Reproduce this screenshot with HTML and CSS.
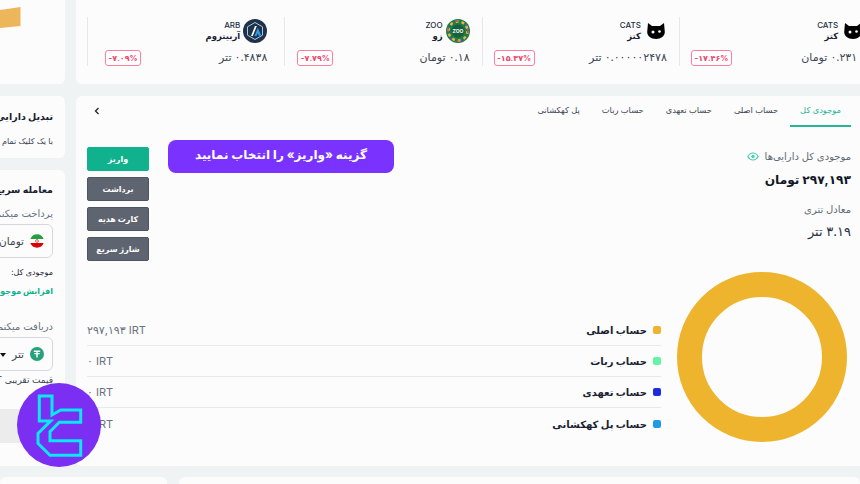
FILE: index.html
```html
<!DOCTYPE html>
<html lang="fa">
<head>
	<meta charset="UTF-8">
	<title>موجودی کل</title>
	<link rel="stylesheet" href="styles.css">
</head>
<body>
	<div class="page">
		<div class="side">
			<div class="side-card side-top">
				<svg class="gold" width="21" height="21" viewBox="0 0 21 21"><path d="M0 3 20.500 0V19L0 21z" fill="#edb65a"/></svg>
			</div>
			<div class="side-card side-convert">
				<h3>تبدیل دارایی خرد</h3>
				<p>با یک کلیک تمام دارایی</p>
			</div>
			<div class="side-card side-trade">
				<h3>معامله سریع</h3>
				<p class="lbl">پرداخت میکنم</p>
				<div class="picker">
					<svg width="14" height="14" viewBox="0 0 14 14"><circle cx="7" cy="7" r="7" fill="#fff"/><path d="M.4 5A7 7 0 0 1 13.600 5z" fill="#239f40"/><path d="M.4 9H13.600A7 7 0 0 1 .4 9z" fill="#da0000"/><circle cx="7" cy="7" r="1.400" fill="none" stroke="#c33" stroke-width=".8"/></svg>
					<span>تومان</span>
				</div>
				<p class="bal">موجودی کل:</p>
				<p class="inc">افزایش موجودی</p>
				<p class="lbl recv">دریافت میکنم</p>
				<div class="picker">
					<svg width="14" height="14" viewBox="0 0 14 14"><circle cx="7" cy="7" r="7" fill="#26a17b"/><path d="M3.800 3.600h6.400v1.300H7.700v1.200c1.300.1 2.400.3 2.400.7s-1.100.6-2.400.7v3H6.300v-3c-1.300-.1-2.400-.3-2.400-.7s1.100-.6 2.400-.7V4.900H3.800z" fill="#fff"/></svg>
					<span>تتر</span>
					<i class="caret"></i>
				</div>
				<p class="rate">قیمت تقریبی USDT</p>
				<div class="grey-btn"></div>
			</div>
		</div>

		<div class="main">
			<div class="ticker">
				<div class="coin coin-arb">
					<span class="pct">-۷.۰۹%</span>
					<div class="coin-info">
						<div class="coin-head">
							<div class="coin-name"><b>ARB</b><strong>آربیتروم</strong></div>
							<svg class="coin-icon" width="24" height="24" viewBox="0 0 24 24"><circle cx="12" cy="12" r="12" fill="#213147"/><path d="M12 3.500 19.500 7.800V16.200L12 20.500 4.500 16.200V7.800z" fill="none" stroke="#9dcced" stroke-width="1"/><path d="M8 17 12 7h1.800L9.800 17z" fill="#fff"/><path d="M11.500 17 14.800 9 18 16l-2 1.200-1.300-3-1.300 3z" fill="#28a0f0"/></svg>
						</div>
						<div class="coin-price">۰.۴۸۳۸ تتر</div>
					</div>
				</div>
				<div class="coin coin-zoo">
					<span class="pct">-۷.۷۹%</span>
					<div class="coin-info">
						<div class="coin-head">
							<div class="coin-name"><b>ZOO</b><strong>زو</strong></div>
							<svg class="coin-icon" width="24" height="24" viewBox="0 0 24 24"><circle cx="12" cy="12" r="12" fill="#1d7a4a"/><circle cx="12" cy="12" r="9.500" fill="none" stroke="#e9b63c" stroke-width="2.500" stroke-dasharray="3 3"/><circle cx="12" cy="12" r="10" fill="none" stroke="#7a4bd0" stroke-width="1.500" stroke-dasharray="2 9"/><circle cx="12" cy="12" r="10" fill="none" stroke="#e2503f" stroke-width="1.500" stroke-dasharray="2 13"/><circle cx="12" cy="12" r="6.500" fill="#17603c"/><text x="12" y="14" text-anchor="middle" class="zoo-text">ZOO</text></svg>
						</div>
						<div class="coin-price">۰.۱۸ تومان</div>
					</div>
				</div>
				<div class="coin coin-cats">
					<span class="pct">-۱۵.۳۷%</span>
					<div class="coin-info">
						<div class="coin-head">
							<div class="coin-name"><b>CATS</b><strong>کتز</strong></div>
							<svg class="coin-icon" width="18" height="16" viewBox="0 0 18 16"><path d="M1 0 5 3h8l4-3 .8 9c0 4-3.800 7-8.800 7S.2 13 .2 9z" fill="#000"/><circle cx="6" cy="9" r="1.500" fill="#fff"/><circle cx="12.500" cy="8.500" r="1.300" fill="#fff"/></svg>
						</div>
						<div class="coin-price">۰.۰۰۰۰۰۲۴۷۸ تتر</div>
					</div>
				</div>
				<div class="coin coin-cats coin-last">
					<span class="pct">-۱۷.۴۶%</span>
					<div class="coin-info">
						<div class="coin-head">
							<div class="coin-name"><b>CATS</b><strong>کتز</strong></div>
							<svg class="coin-icon" width="18" height="16" viewBox="0 0 18 16"><path d="M1 0 5 3h8l4-3 .8 9c0 4-3.800 7-8.800 7S.2 13 .2 9z" fill="#000"/><circle cx="6" cy="9" r="1.500" fill="#fff"/><circle cx="12.500" cy="8.500" r="1.300" fill="#fff"/></svg>
						</div>
						<div class="coin-price">۰.۲۳۱ تومان</div>
					</div>
				</div>
			</div>

			<div class="wallet">
				<div class="tabs">
					<span class="tab active">موجودی کل</span>
					<span class="tab">حساب اصلی</span>
					<span class="tab">حساب تعهدی</span>
					<span class="tab">حساب ربات</span>
					<span class="tab">پل کهکشانی</span>
					<svg class="chev" width="6" height="8" viewBox="0 0 6 8"><path d="M4.500 1 1.500 4 4.500 7" fill="none" stroke="#1a2233" stroke-width="1.300"/></svg>
				</div>
				<div class="top-row">
					<div class="summary">
						<p class="sum-lbl">موجودی کل دارایی‌ها
							<svg width="12" height="9" viewBox="0 0 12 9"><path d="M.8 4.500C2.200 2 4 1 6 1s3.800 1 5.200 3.500C9.800 7 8 8 6 8S2.200 7 .8 4.500z" fill="none" stroke="#4fcfae" stroke-width="1.200"/><circle cx="6" cy="4.500" r="1.700" fill="#4fcfae"/></svg>
						</p>
						<p class="sum-total">۲۹۷,۱۹۳ تومان</p>
						<p class="sum-lbl sum-eq">معادل تتری</p>
						<p class="sum-usdt">۳.۱۹ تتر</p>
					</div>
					<div class="actions">
						<button class="act green" type="button">واریز</button>
						<button class="act" type="button">برداشت</button>
						<button class="act" type="button">کارت هدیه</button>
						<button class="act" type="button">شارژ سریع</button>
					</div>
				</div>
				<div class="bottom-row">
					<div class="donut"></div>
					<ul class="legend">
						<li><i class="dot" style="background:#efb42d"></i><b>حساب اصلی</b><span>۲۹۷,۱۹۳ IRT</span></li>
						<li><i class="dot" style="background:#63f5a6"></i><b>حساب ربات</b><span>۰ IRT</span></li>
						<li><i class="dot" style="background:#1c2bdc"></i><b>حساب تعهدی</b><span>۰ IRT</span></li>
						<li><i class="dot" style="background:#1f9bea"></i><b>حساب پل کهکشانی</b><span>۰ IRT</span></li>
					</ul>
				</div>
				<div class="banner">گزینه «واریز» را انتخاب نمایید</div>
			</div>

			<div class="bottom-cards">
				<div class="bottom-card"></div>
				<div class="bottom-card"></div>
			</div>
		</div>
	</div>

	<div class="badge">
		<svg width="60" height="70" viewBox="-1 0 60 70"><path d="M9.300 6H22V25L30.700 20H50.700V32.300H29.300L20 41.700V50.700H50.700V65.300H20L8 53.300V43.300L20.700 31H9.300z" fill="none" stroke="#0ae8f8" stroke-width="3"/></svg>
	</div>
</body>
</html>
```

FILE: styles.css
```css
/* Reset */
body,h3,p,ul{ margin:0; padding:0; }
ul{ list-style:none; }
i,b,strong{ font-style:normal; }

html,body{ width:860px; height:484px; overflow:hidden; }
body{
	background:#eff3f3;
	font-family:"Inter","DejaVu Sans","Noto Sans",sans-serif;
	color:#1a2233;
	direction:rtl;
}
.page{
	display:flex;
	direction:ltr;
	gap:11px;
	height:484px;
}

/* left column, cut by the window */
.side{
	width:65px;
	flex:none;
	display:flex;
	flex-direction:column;
	gap:12px;
}
.side-card{
	background:#fcfcfc;
	border-radius:0 6px 6px 0;
	overflow:hidden;
	direction:rtl;
	white-space:nowrap;
	padding-right:12px;
}
.side-top{ height:84px; border-radius:0 0 6px 0; position:relative; }
.gold{ position:absolute; left:0; top:7px; }
.side-convert{ height:62px; padding-top:14px; box-sizing:border-box; }
.side-convert h3,.side-trade h3{ font-size:9.500px; font-weight:700; line-height:14px; }
.side-convert p{ font-size:8px; line-height:12px; margin-top:11px; color:#3c4655; }
.side-trade{ height:296px; padding-top:13px; box-sizing:border-box; position:relative; }
.lbl{ font-size:10px; line-height:14px; color:#6a7280; margin-top:9px; }
.picker{
	display:flex;
	align-items:center;
	gap:6px;
	width:100px;
	height:34px;
	border:1px solid #d5d9dd;
	border-radius:6px;
	margin-top:4px;
	padding-right:8px;
	box-sizing:border-box;
	font-size:10.500px;
	color:#3c4655;
}
.caret{ width:0; height:0; border:3px solid transparent; border-top:4px solid #111; margin-top:4px; }
.bal{ font-size:8px; line-height:12px; margin-top:8px; }
.inc{ font-size:8px; font-weight:700; line-height:12px; margin-top:7px; color:#10b28d; }
.lbl.recv{ margin-top:22px; }
.rate{ font-size:9px; line-height:12px; margin-top:3px; color:#3c4655; }
.grey-btn{ position:absolute; left:0; right:0; top:239px; height:34px; background:#ececec; }

.main{
	flex:1;
	min-width:0;
	display:flex;
	flex-direction:column;
	gap:12px;
}

/* coin strip */
.ticker{
	height:84px;
	flex:none;
	background:#fcfcfc;
	border-radius:0 0 0 6px;
	display:flex;
	padding:17px 0 0 11px;
	box-sizing:border-box;
	overflow:hidden;
}
.coin{
	width:197.300px;
	flex:none;
	height:49px;
	box-sizing:border-box;
	border-left:1px solid #e6e8ea;
	padding:0 14px 0 11px;
	display:flex;
	justify-content:space-between;
	align-items:flex-start;
}
.coin-arb{ padding-left:17px; padding-right:17px; }
.coin-zoo{ padding-left:12px; padding-right:12px; }
.pct{
	align-self:flex-end;
	border:1px solid #ff7f9c;
	border-radius:3px;
	font-size:8px;
	font-weight:700;
	color:#f0466e;
	background:#fff;
	padding:0 2.500px;
	line-height:14px;
	direction:ltr;
}
.coin-info{ display:flex; flex-direction:column; align-items:flex-end; margin-top:2px; }
.coin-head{ display:flex; gap:3px; align-items:center; height:24px; }
.coin-cats .coin-head{ gap:6px; }
.coin-name{ display:flex; flex-direction:column; align-items:flex-end; }
.coin-name b{ font-size:8px; font-weight:500; line-height:10px; color:#1f3044; }
.coin-name strong{ font-size:8.500px; font-weight:700; line-height:13px; }
.coin-icon{ flex:none; }
.zoo-text{ font:700 5px "Inter",sans-serif; fill:#fff; }
.coin-price{ direction:rtl; font-size:11px; color:#3c4655; line-height:16px; margin-top:6px; white-space:nowrap; }
.coin-cats .coin-price{ margin-right:-2px; }
.coin-last .coin-price{ margin-right:5px; }

/* wallet card */
.wallet{
	height:370px;
	flex:none;
	background:#fcfcfc;
	border-radius:6px 0 0 6px;
	position:relative;
	display:flex;
	flex-direction:column;
	direction:rtl;
	padding:0 9px 0 11px;
	overflow:hidden;
}
.tabs{ display:flex; height:31px; flex:none; align-items:flex-start; font-size:8.300px; }
.tab{
	padding:0 10px;
	height:31px;
	box-sizing:border-box;
	line-height:29px;
	white-space:nowrap;
	color:#3c4655;
	margin-left:2px;
}
.tab.active{ color:#23b795; border-bottom:2px solid #23b795; }
.chev{ margin-right:auto; margin-left:7px; margin-top:11px; }
.top-row{ display:flex; justify-content:space-between; height:145px; flex:none; }
.summary p{ white-space:nowrap; }
.sum-lbl{ font-size:10px; color:#5f6875; line-height:14px; margin-top:22px; }
.sum-lbl svg{ vertical-align:-1px; margin-right:3px; }
.sum-total{ font-size:12.200px; font-weight:700; line-height:20px; margin-top:7px; color:#111827; }
.sum-lbl.sum-eq{ margin-top:12px; }
.sum-usdt{ font-size:13px; line-height:16px; margin-top:7px; color:#2a3342; }
.actions{ display:flex; flex-direction:column; gap:6px; width:62px; margin-top:20px; }
.act{
	height:24px;
	border:1px solid #4f5661;
	border-radius:2px;
	background:#5f6570;
	color:#fff;
	font:700 8px "Inter","DejaVu Sans",sans-serif;
	padding:0;
}
.act.green{ background:#0fb28c; border-color:#0fb28c; }
.bottom-row{ display:flex; gap:16px; flex:1; }
.donut{
	width:170px;
	height:170px;
	flex:none;
	box-sizing:border-box;
	border:25px solid #efb42d;
	border-radius:50%;
	margin-right:4px;
}
.legend{ flex:1; margin-top:43px; }
.legend li{
	display:flex;
	align-items:center;
	height:31px;
	box-sizing:border-box;
	border-bottom:1px solid #e8e9ea;
	font-size:10px;
}
.legend li:last-child{ border-bottom:0; }
.dot{ width:8px; height:8px; border-radius:2px; margin-left:6px; }
.legend b{ font-weight:700; color:#1a2233; }
.legend span{ margin-right:auto; font-size:11px; color:#6a7280; direction:ltr; }

.banner{
	position:absolute;
	left:92px;
	top:44px;
	width:226px;
	height:33px;
	border-radius:8px;
	background:#7a33ff;
	color:#fff;
	font-size:12px;
	font-weight:700;
	line-height:30px;
	text-align:center;
}

.bottom-cards{ flex:1; display:flex; gap:12px; margin:-1px 0 0 -76px; }
.bottom-card{ background:#fcfcfc; border-radius:6px 6px 0 0; }
.bottom-card:first-child{ width:167px; flex:none; }
.bottom-card:last-child{ flex:1; }

/* floating logo */
.badge{
	position:absolute;
	left:17px;
	top:383px;
	width:84px;
	height:84px;
	border-radius:50%;
	background:#7a2ff2;
	display:flex;
	align-items:center;
	justify-content:center;
}
```
